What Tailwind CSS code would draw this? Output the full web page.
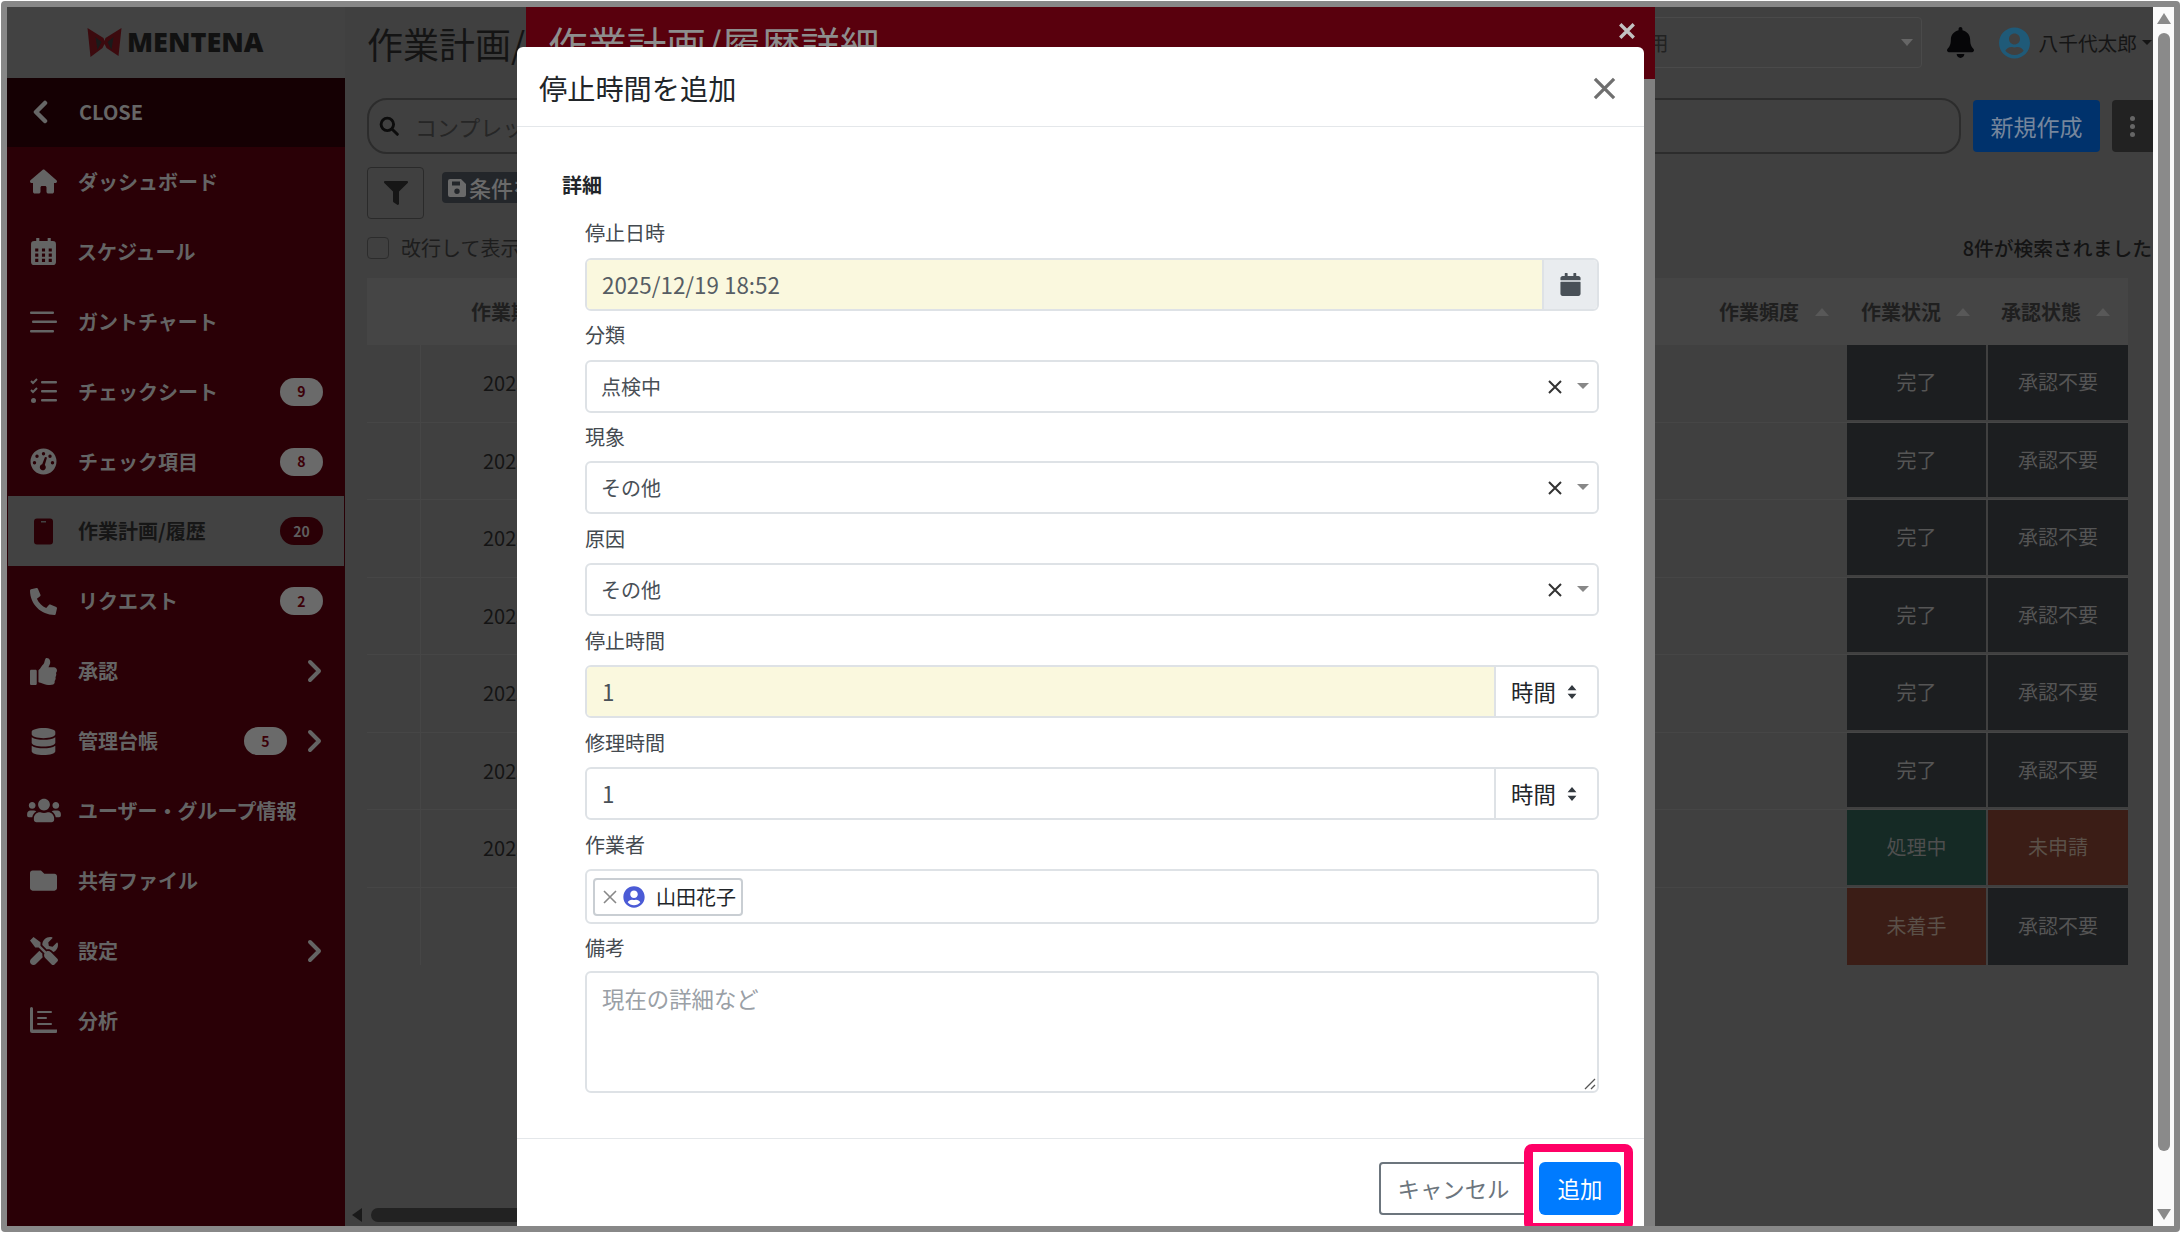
<!DOCTYPE html>
<html lang="ja">
<head>
  <meta charset="UTF-8">
  <title>停止時間を追加</title>
  <script src="https://cdn.jsdelivr.net/npm/@tailwindcss/browser@4"></script>
</head>
<body class="w-[2181px] h-[1233px] overflow-hidden bg-white font-['Noto_Sans_CJK_JP','Noto_Sans',sans-serif]">
  <div class="relative w-[2179px] h-[1231px] mt-px ml-px border-[6px] border-[#888] rounded-sm overflow-hidden flex bg-[#404040]">

    <!-- sidebar -->
    <aside class="w-[338px] shrink-0 bg-[#2a0006] flex flex-col">
      <div class="h-[71px] bg-[#424242] flex items-center pl-[80px] gap-[6px]">
        <svg viewBox="0 0 34 30" class="w-[35px] h-[30px]">
          <path d="M0 0 L16 10 L17 13 L18 10 L34 0 L31 28 L19 20 L17 16 L15 20 L3 29 Z" fill="#3c0a0e"/>
          <path d="M8 9 L14 14 L10 22 Z M26 9 L20 14 L24 22 Z" fill="#1a1a1a"/>
        </svg>
        <span class="font-['Open_Sans'] font-extrabold text-[27px] -ml-px text-[#111]">MENTENA</span>
      </div>
      <div class="h-[69px] bg-[#150003] flex items-center pl-[25px] pb-[2px] text-[#666]">
        <svg viewBox="0 0 16 24" class="w-[16px] h-[24px]"><path d="M13 3 L4 12 L13 21" fill="none" stroke="currentColor" stroke-width="4.5" stroke-linecap="round" stroke-linejoin="round"/></svg>
        <span class="ml-[31px] font-bold text-[20px]">CLOSE</span>
      </div>
      <nav class="flex flex-col text-[#646464] font-bold text-[20px]">
        <a class="h-[69.9px] flex items-center pl-[23px] pr-[22px]">
          <svg viewBox="0 0 576 512" class="w-[27px] h-[27px] fill-current"><path d="M575.8 255.5c0 18-15 32.1-32 32.1h-32l.7 160.2c0 2.7-.2 5.4-.5 8.1V472c0 22.1-17.9 40-40 40H456c-1.1 0-2.2 0-3.3-.1c-1.4 .1-2.8 .1-4.2 .1H416 392c-22.1 0-40-17.9-40-40V448 384c0-17.7-14.3-32-32-32H256c-17.7 0-32 14.3-32 32v64 24c0 22.1-17.9 40-40 40H160 128.1c-1.5 0-3-.1-4.5-.2c-1.2 .1-2.4 .2-3.6 .2H104c-22.1 0-40-17.9-40-40V360c0-.9 0-1.9 .1-2.8V287.6H32c-18 0-32-14-32-32.1c0-9 3-17 10-24L266.4 8c7-7 15-8 22-8s15 2 21 7L564.8 231.5c8 7 12 15 11 24z"/></svg>
          <span class="ml-[21px]">ダッシュボード</span>
        </a>
        <a class="h-[69.9px] flex items-center pl-[24px] pr-[22px]">
          <svg viewBox="0 0 24 26" class="w-[25px] h-[27px] fill-current"><path fill-rule="evenodd" d="M5 0h3v3h8V0h3v3h2a3 3 0 0 1 3 3v17a3 3 0 0 1-3 3H3a3 3 0 0 1-3-3V6a3 3 0 0 1 3-3h2z M4 10h3v3H4z M10.5 10h3v3h-3z M17 10h3v3h-3z M4 15h3v3H4z M10.5 15h3v3h-3z M17 15h3v3h-3z M4 20h3v3H4z M10.5 20h3v3h-3z M17 20h3v3h-3z"/></svg>
          <span class="ml-[21px]">スケジュール</span>
        </a>
        <a class="h-[69.9px] flex items-center pl-[23px] pr-[22px]">
          <svg viewBox="0 0 27 27" class="w-[27px] h-[27px] fill-current"><rect x="0" y="3.5" width="24" height="2.5" rx="1"/><rect x="2" y="12.5" width="25" height="2.5" rx="1"/><rect x="0" y="22" width="24" height="2.5" rx="1"/></svg>
          <span class="ml-[21px]">ガントチャート</span>
        </a>
        <a class="h-[69.9px] flex items-center pl-[23px] pr-[22px]">
          <svg viewBox="0 0 27 27" class="w-[27px] h-[27px] fill-current"><rect x="11" y="3" width="16" height="2.5" rx="1"/><rect x="11" y="12" width="16" height="2.5" rx="1"/><rect x="11" y="21" width="16" height="2.5" rx="1"/><path d="M1 3 L3 5 L7 1" fill="none" stroke="currentColor" stroke-width="2"/><path d="M1 12 L3 14 L7 10" fill="none" stroke="currentColor" stroke-width="2"/><circle cx="3.5" cy="22.5" r="2.5"/></svg>
          <span class="ml-[21px]">チェックシート</span>
          <span class="ml-auto w-[43px] h-[28px] rounded-full bg-[#6a6a6a] text-[#3c0008] text-[14px] flex items-center justify-center">9</span>
        </a>
        <a class="h-[69.9px] flex items-center pl-[23px] pr-[22px]">
          <svg viewBox="0 0 27 27" class="w-[27px] h-[27px] fill-current"><path fill-rule="evenodd" d="M13.5 0.5a13 13 0 1 0 0 26a13 13 0 1 0 0-26z M13.5 4a1.7 1.7 0 1 1 0 3.4a1.7 1.7 0 1 1 0-3.4z M7 6.5a1.7 1.7 0 1 1 0 3.4a1.7 1.7 0 1 1 0-3.4z M4.5 13a1.7 1.7 0 1 1 0 3.4a1.7 1.7 0 1 1 0-3.4z M20 6.5a1.7 1.7 0 1 1 0 3.4a1.7 1.7 0 1 1 0-3.4z M22.5 13a1.7 1.7 0 1 1 0 3.4a1.7 1.7 0 1 1 0-3.4z M17 9.5 L14.8 17 a3 3 0 1 1-2.6-.7 L15 9z"/></svg>
          <span class="ml-[21px]">チェック項目</span>
          <span class="ml-auto w-[43px] h-[28px] rounded-full bg-[#6a6a6a] text-[#3c0008] text-[14px] flex items-center justify-center">8</span>
        </a>
        <a class="h-[69.9px] mx-px flex items-center pl-[22px] pr-[21px] bg-[#424242] text-[#161616]">
          <svg viewBox="0 0 27 27" class="w-[27px] h-[27px]"><path fill-rule="evenodd" fill="#2a0006" d="M7 0.5 H20 a3 3 0 0 1 3 3 V23.5 a3 3 0 0 1-3 3 H7 a3 3 0 0 1-3-3 V3.5 a3 3 0 0 1 3-3z M11 3 h5 v1.4 h-5z"/></svg>
          <span class="ml-[21px]">作業計画/履歴</span>
          <span class="ml-auto w-[43px] h-[28px] rounded-full bg-[#2a0006] text-[#5e5e5e] text-[14px] flex items-center justify-center">20</span>
        </a>
        <a class="h-[69.9px] flex items-center pl-[23px] pr-[22px]">
          <svg viewBox="0 0 512 512" class="w-[27px] h-[27px] fill-current"><path transform="translate(512 0) scale(-1 1)" d="M493.4 24.6l-104-24c-11.3-2.6-22.9 3.3-27.5 13.9l-48 112c-4.2 9.8-1.4 21.3 6.9 28l60.6 49.6c-36 76.7-98.9 140.5-177.2 177.2l-49.6-60.6c-6.8-8.3-18.2-11.1-28-6.9l-112 48C3.9 366.5-2 378.1.6 389.4l24 104C27.1 504.2 36.7 512 48 512c256.1 0 464-207.5 464-464 0-11.2-7.7-20.9-18.6-23.4z"/></svg>
          <span class="ml-[21px]">リクエスト</span>
          <span class="ml-auto w-[43px] h-[28px] rounded-full bg-[#6a6a6a] text-[#3c0008] text-[14px] flex items-center justify-center">2</span>
        </a>
        <a class="h-[69.9px] flex items-center pl-[23px] pr-[22px]">
          <svg viewBox="0 0 512 512" class="w-[27px] h-[27px] fill-current"><path d="M104 224H24c-13.255 0-24 10.745-24 24v240c0 13.255 10.745 24 24 24h80c13.255 0 24-10.745 24-24V248c0-13.255-10.745-24-24-24zM384 81.452c0 42.416-25.97 66.208-33.277 94.548h101.723c33.397 0 59.397 27.746 59.553 58.098.084 17.938-7.546 37.249-19.439 49.197l-.11.11c9.836 23.337 8.237 56.037-9.308 79.469 8.681 25.895-.069 57.704-16.382 74.757 4.298 17.598 2.244 32.575-6.148 44.632C440.202 511.587 389.616 512 346.839 512l-2.845-.001c-48.287-.017-87.806-17.598-119.56-31.725-15.957-7.099-36.821-15.887-52.651-16.178-6.54-.12-11.783-5.457-11.783-11.998v-213.77c0-3.2 1.282-6.271 3.558-8.521 39.614-39.144 56.648-80.587 89.117-113.111 14.804-14.832 20.188-37.236 25.393-58.902C282.515 39.293 291.817 0 312 0c24 0 72 8 72 81.452z"/></svg>
          <span class="ml-[21px]">承認</span>
          <svg viewBox="0 0 16 24" class="ml-auto w-[16px] h-[24px]"><path d="M3 3 L12 12 L3 21" fill="none" stroke="currentColor" stroke-width="4" stroke-linecap="round" stroke-linejoin="round"/></svg>
        </a>
        <a class="h-[69.9px] flex items-center pl-[23px] pr-[22px]">
          <svg viewBox="0 0 448 512" class="w-[27px] h-[27px] fill-current"><path d="M448 73.143v45.714C448 159.143 347.667 192 224 192S0 159.143 0 118.857V73.143C0 32.857 100.333 0 224 0s224 32.857 224 73.143zM448 176v102.857C448 319.143 347.667 352 224 352S0 319.143 0 278.857V176c48.125 33.143 136.208 48.572 224 48.572S399.874 209.143 448 176zm0 160v102.857C448 479.143 347.667 512 224 512S0 479.143 0 438.857V336c48.125 33.143 136.208 48.572 224 48.572S399.874 369.143 448 336z"/></svg>
          <span class="ml-[21px]">管理台帳</span>
          <span class="ml-auto w-[43px] h-[28px] rounded-full bg-[#6a6a6a] text-[#3c0008] text-[14px] flex items-center justify-center">5</span>
          <svg viewBox="0 0 16 24" class="ml-[20px] w-[16px] h-[24px]"><path d="M3 3 L12 12 L3 21" fill="none" stroke="currentColor" stroke-width="4" stroke-linecap="round" stroke-linejoin="round"/></svg>
        </a>
        <a class="h-[69.9px] flex items-center pl-[20px] pr-[22px]">
          <svg viewBox="0 0 640 512" class="w-[34px] h-[27px] fill-current"><path d="M96 224c35.3 0 64-28.7 64-64s-28.7-64-64-64-64 28.7-64 64 28.7 64 64 64zm448 0c35.3 0 64-28.7 64-64s-28.7-64-64-64-64 28.7-64 64 28.7 64 64 64zm32 32h-64c-17.6 0-33.5 7.1-45.1 18.6 40.3 22.1 68.9 62 75.1 109.4h66c17.7 0 32-14.3 32-32v-32c0-35.3-28.7-64-64-64zm-256 0c61.9 0 112-50.1 112-112S381.9 32 320 32 208 82.1 208 144s50.1 112 112 112zm76.8 32h-8.3c-20.8 10-43.9 16-68.5 16s-47.6-6-68.5-16h-8.3C179.6 288 128 339.6 128 403.2V432c0 26.5 21.5 48 48 48h288c26.5 0 48-21.5 48-48v-28.8c0-63.6-51.6-115.2-115.2-115.2zm-223.7-13.4C161.5 263.1 145.6 256 128 256H64c-35.3 0-64 28.7-64 64v32c0 17.7 14.3 32 32 32h65.9c6.3-47.4 34.9-87.3 75.2-109.4z"/></svg>
          <span class="ml-[17px]">ユーザー・グループ情報</span>
        </a>
        <a class="h-[69.9px] flex items-center pl-[23px] pr-[22px]">
          <svg viewBox="0 0 512 512" class="w-[27px] h-[27px] fill-current"><path d="M464 128H272l-64-64H48C21.49 64 0 85.49 0 112v288c0 26.51 21.49 48 48 48h416c26.51 0 48-21.49 48-48V176c0-26.51-21.49-48-48-48z"/></svg>
          <span class="ml-[21px]">共有ファイル</span>
        </a>
        <a class="h-[69.9px] flex items-center pl-[23px] pr-[22px]">
          <svg viewBox="0 0 512 512" class="w-[28px] h-[28px] fill-current"><path d="M501.1 395.7L384 278.6c-23.1-23.1-57.6-27.6-85.4-13.9L192 158.1V96L64 0 0 64l96 128h62.1l106.6 106.6c-13.6 27.8-9.2 62.3 13.9 85.4l117.1 117.1c14.6 14.6 38.2 14.6 52.7 0l52.7-52.7c14.5-14.6 14.5-38.2 0-52.7zM331.7 225c28.3 0 54.9 11 74.9 31l19.4 19.4c15.8-6.9 30.8-16.5 43.8-29.5 37.1-37.1 49.7-89.3 37.9-136.7-2.2-9-13.5-12.1-20.1-5.5l-74.4 74.4-67.9-11.3L334 98.9l74.4-74.4c6.6-6.6 3.4-17.9-5.7-20.2-47.4-11.7-99.6.9-136.6 37.9-28.5 28.5-41.9 66.1-41.2 103.6l82.1 82.1c8.1-1.9 16.5-2.9 24.7-2.9zm-103.9 82l-56.7-56.7L18.7 402.8c-25 25-25 65.5 0 90.5s65.5 25 90.5 0l123.6-123.6c-7.6-19.9-9.9-41.6-5-62.7z"/></svg>
          <span class="ml-[20px]">設定</span>
          <svg viewBox="0 0 16 24" class="ml-auto w-[16px] h-[24px]"><path d="M3 3 L12 12 L3 21" fill="none" stroke="currentColor" stroke-width="4" stroke-linecap="round" stroke-linejoin="round"/></svg>
        </a>
        <a class="h-[69.9px] flex items-center pl-[23px] pr-[22px]">
          <svg viewBox="0 0 27 27" class="w-[27px] h-[27px] fill-current"><path d="M0 1.5 a1.5 1.5 0 0 1 3 0 V22.5 H27 V25 a1 1 0 0 1-1 1 H2 a2 2 0 0 1-2-2 Z"/><rect x="7" y="4" width="15" height="2" rx="1"/><rect x="7" y="10" width="10" height="2" rx="1"/><rect x="7" y="16" width="15" height="2" rx="1"/></svg>
          <span class="ml-[21px]">分析</span>
        </a>
      </nav>
    </aside>

    <!-- page behind the dialogs -->
    <main class="relative flex-1 min-w-0 pl-[22px]">
      <div class="h-[71px] flex items-center">
        <h1 class="text-[36px] font-normal text-[#141414] whitespace-nowrap">作業計画/履歴</h1>
        <div class="ml-auto w-[402px] h-[51px] border border-[#4a4a4a] rounded flex items-center justify-between pl-[113px] pr-[8px] text-[20px] text-[#222]">
          <span>Q用</span><span class="w-0 h-0 border-x-[6px] border-x-transparent border-t-[7px] border-t-[#666]"></span>
        </div>
        <svg viewBox="0 0 448 512" class="ml-[25px] w-[27px] h-[31px] fill-[#060608]"><path d="M224 512c35.32 0 63.97-28.65 63.97-64H160.03c0 35.35 28.65 64 63.97 64zm215.39-149.71c-19.32-20.76-55.47-51.99-55.47-154.29 0-77.7-54.48-139.9-127.94-155.16V32c0-17.67-14.32-32-31.98-32s-31.98 14.33-31.98 32v20.84C118.56 68.1 64.08 130.3 64.08 208c0 102.3-36.15 133.53-55.47 154.29-6 6.45-8.66 14.16-8.61 21.71.11 16.4 12.98 32 32.1 32h383.8c19.12 0 32-15.6 32.1-32 .05-7.55-2.61-15.27-8.61-21.71z"/></svg>
        <svg viewBox="0 0 496 512" class="ml-[25px] w-[31px] h-[32px] fill-[#1f5a78]"><path d="M248 8C111 8 0 119 0 256s111 248 248 248 248-111 248-248S385 8 248 8zm0 96c48.6 0 88 39.4 88 88s-39.4 88-88 88-88-39.4-88-88 39.4-88 88-88zm0 344c-58.7 0-111.3-26.6-146.5-68.2 18.8-35.4 55.6-59.8 98.5-59.8 2.4 0 4.8.4 7.1 1.1 13 4.2 26.6 6.9 40.9 6.9 14.3 0 28-2.7 40.9-6.9 2.3-.7 4.7-1.1 7.1-1.1 42.9 0 79.7 24.4 98.5 59.8C359.3 421.4 306.7 448 248 448z"/></svg>
        <span class="ml-[9px] text-[19.7px] text-[#151515] whitespace-nowrap">八千代太郎</span>
        <span class="ml-[5px] mr-px w-0 h-0 border-x-[5px] border-x-transparent border-t-[5px] border-t-[#151515]"></span>
      </div>

      <div class="flex items-center gap-[12px] mt-[20px] h-[56px]">
        <div class="flex-1 h-[56px] rounded-[20px] border-2 border-[#2c2c2c] flex items-center pl-[10px] gap-[16px] overflow-hidden">
          <svg viewBox="0 0 24 24" class="w-[20px] h-[20px]"><circle cx="10" cy="10" r="7.5" fill="none" stroke="#0c0c0c" stroke-width="3.5"/><path d="M15.5 15.5 L22 22" stroke="#0c0c0c" stroke-width="3.5" stroke-linecap="round"/></svg>
          <span class="text-[22px] text-[#262626] whitespace-nowrap">コンプレックス</span>
        </div>
        <button class="w-[127px] h-[52px] rounded bg-[#00326c] text-[#76869c] text-[23px]">新規作成</button>
        <button class="w-[41px] h-[52px] rounded-l bg-[#222] flex flex-col items-center justify-center gap-[3px]">
          <span class="w-[5px] h-[5px] rounded-full bg-[#666]"></span><span class="w-[5px] h-[5px] rounded-full bg-[#666]"></span><span class="w-[5px] h-[5px] rounded-full bg-[#666]"></span>
        </button>
      </div>

      <div class="flex items-start mt-[13px] h-[52px]">
        <button class="w-[57px] h-[52px] rounded border border-[#2a2a2a] flex items-center justify-center">
          <svg viewBox="0 0 512 512" class="w-[24px] h-[24px] fill-[#161616]"><path d="M487.976 0H24.028C2.71 0-8.047 25.866 7.058 40.971L192 225.941V432c0 7.831 3.821 15.17 10.237 19.662l80 55.98C298.02 518.69 320 507.493 320 487.98V225.941l184.947-184.97C520.021 25.896 509.338 0 487.976 0z"/></svg>
        </button>
        <div class="ml-[18px] mt-[5px] w-[200px] h-[31px] rounded bg-[#23262a] flex items-center pl-[5px] gap-[2px] text-[#6a6a6a] text-[22px] font-medium">
          <svg viewBox="0 0 20 20" class="w-[20px] h-[20px] shrink-0"><path fill-rule="evenodd" fill="#6a6a6a" d="M3 1 H14 L19 6 V17 a2 2 0 0 1-2 2 H3 a2 2 0 0 1-2-2 V3 a2 2 0 0 1 2-2z M5 3.5 V7.5 H13 V3.5z M10 10.5 a2.7 2.7 0 1 0 0 5.4 a2.7 2.7 0 1 0 0-5.4z"/></svg>
          <span class="whitespace-nowrap">条件を保存</span>
        </div>
      </div>

      <div class="flex items-center mt-[16px] h-[26px]">
        <span class="w-[22px] h-[22px] rounded border border-[#2c2c2c]"></span>
        <span class="ml-[12px] text-[20px] text-[#1d1d1d]">改行して表示</span>
        <span class="ml-auto mr-px text-[19.8px] font-medium text-[#141414]">8件が検索されました</span>
      </div>

      <!-- table: only the outer columns show either side of the dialogs -->
      <div class="mt-[17px] flex h-[67px] w-[1761px] bg-[#454545] items-center text-[#1f1f1f] text-[20px] font-bold">
        <span class="ml-[104px]">作業期間</span>
        <div class="ml-auto flex items-center">
          <span>作業頻度</span><span class="ml-[16px] w-0 h-0 border-x-[7px] border-x-transparent border-b-[8px] border-b-[#585858]"></span>
          <span class="ml-[32px]">作業状況</span><span class="ml-[15px] w-0 h-0 border-x-[7px] border-x-transparent border-b-[8px] border-b-[#585858]"></span>
          <span class="ml-[31px]">承認状態</span><span class="ml-[15px] mr-[18px] w-0 h-0 border-x-[7px] border-x-transparent border-b-[8px] border-b-[#585858]"></span>
        </div>
      </div>
      <div class="w-[1761px] flex flex-col text-[20px]">
        <div class="h-[77.5px] flex items-center border-b border-[#464646]">
          <span class="w-[54px] h-full border-r border-[#464646]"></span><span class="ml-[62px] text-[#141414]">2025</span>
          <span class="ml-auto w-[139px] h-full bg-[#1c1e20] border-b-2 border-[#404040] text-[#555] flex items-center justify-center">完了</span>
          <span class="ml-[2px] w-[140px] h-full bg-[#1c1e20] border-b-2 border-[#404040] text-[#555] flex items-center justify-center">承認不要</span>
        </div>
        <div class="h-[77.5px] flex items-center border-b border-[#464646]">
          <span class="w-[54px] h-full border-r border-[#464646]"></span><span class="ml-[62px] text-[#141414]">2025</span>
          <span class="ml-auto w-[139px] h-full bg-[#1c1e20] border-b-2 border-[#404040] text-[#555] flex items-center justify-center">完了</span>
          <span class="ml-[2px] w-[140px] h-full bg-[#1c1e20] border-b-2 border-[#404040] text-[#555] flex items-center justify-center">承認不要</span>
        </div>
        <div class="h-[77.5px] flex items-center border-b border-[#464646]">
          <span class="w-[54px] h-full border-r border-[#464646]"></span><span class="ml-[62px] text-[#141414]">2025</span>
          <span class="ml-auto w-[139px] h-full bg-[#1c1e20] border-b-2 border-[#404040] text-[#555] flex items-center justify-center">完了</span>
          <span class="ml-[2px] w-[140px] h-full bg-[#1c1e20] border-b-2 border-[#404040] text-[#555] flex items-center justify-center">承認不要</span>
        </div>
        <div class="h-[77.5px] flex items-center border-b border-[#464646]">
          <span class="w-[54px] h-full border-r border-[#464646]"></span><span class="ml-[62px] text-[#141414]">2025</span>
          <span class="ml-auto w-[139px] h-full bg-[#1c1e20] border-b-2 border-[#404040] text-[#555] flex items-center justify-center">完了</span>
          <span class="ml-[2px] w-[140px] h-full bg-[#1c1e20] border-b-2 border-[#404040] text-[#555] flex items-center justify-center">承認不要</span>
        </div>
        <div class="h-[77.5px] flex items-center border-b border-[#464646]">
          <span class="w-[54px] h-full border-r border-[#464646]"></span><span class="ml-[62px] text-[#141414]">2025</span>
          <span class="ml-auto w-[139px] h-full bg-[#1c1e20] border-b-2 border-[#404040] text-[#555] flex items-center justify-center">完了</span>
          <span class="ml-[2px] w-[140px] h-full bg-[#1c1e20] border-b-2 border-[#404040] text-[#555] flex items-center justify-center">承認不要</span>
        </div>
        <div class="h-[77.5px] flex items-center border-b border-[#464646]">
          <span class="w-[54px] h-full border-r border-[#464646]"></span><span class="ml-[62px] text-[#141414]">2025</span>
          <span class="ml-auto w-[139px] h-full bg-[#1c1e20] border-b-2 border-[#404040] text-[#555] flex items-center justify-center">完了</span>
          <span class="ml-[2px] w-[140px] h-full bg-[#1c1e20] border-b-2 border-[#404040] text-[#555] flex items-center justify-center">承認不要</span>
        </div>
        <div class="h-[77.5px] flex items-center border-b border-[#464646]">
          <span class="w-[54px] h-full border-r border-[#464646]"></span><span class="ml-[62px] text-[#141414]">2025</span>
          <span class="ml-auto w-[139px] h-full bg-[#152a25] border-b-2 border-[#404040] text-[#4e4e4e] flex items-center justify-center">処理中</span>
          <span class="ml-[2px] w-[140px] h-full bg-[#3b1d16] border-b-2 border-[#404040] text-[#5a5048] flex items-center justify-center">未申請</span>
        </div>
        <div class="h-[77.5px] flex items-center">
          <span class="w-[54px] h-full border-r border-[#464646]"></span>
          <span class="ml-auto w-[139px] h-full bg-[#3b1d16] text-[#5a5048] flex items-center justify-center">未着手</span>
          <span class="ml-[2px] w-[140px] h-full bg-[#1c1e20] text-[#555] flex items-center justify-center">承認不要</span>
        </div>
      </div>

      <!-- horizontal scrollbar -->
      <div class="absolute left-[7px] bottom-[4px] flex items-center gap-[9px]">
        <span class="w-0 h-0 border-y-[7px] border-y-transparent border-r-[10px] border-r-[#1a1a1a]"></span>
        <span class="w-[400px] h-[14px] rounded-full bg-[#222]"></span>
      </div>
    </main>

    <!-- page scrollbar -->
    <div class="w-[21px] shrink-0 bg-[#fafafa] flex flex-col items-center pt-[6px] pb-[6px]">
      <span class="w-0 h-0 border-x-[7px] border-x-transparent border-b-[11px] border-b-[#8a8a8a]"></span>
      <span class="mt-[9px] w-[12px] h-[1118px] rounded-full bg-[#8a8a8a]"></span>
      <span class="mt-auto w-0 h-0 border-x-[7px] border-x-transparent border-t-[11px] border-t-[#8a8a8a]"></span>
    </div>

    <!-- dialog underneath: 作業計画/履歴詳細 -->
    <div class="absolute left-[519px] top-0 w-[1129px] h-[1220px] bg-[#808080]">
      <div class="h-[72px] bg-[#59000d] relative pl-[22px] overflow-hidden">
        <span class="block mt-[7px] text-[39.5px] text-[#8d8d8d] whitespace-nowrap">作業計画/履歴詳細</span>
        <svg viewBox="0 0 16 16" class="absolute right-[19px] top-[15px] w-[18px] h-[18px]"><path d="M2 2 L14 14 M14 2 L2 14" stroke="#c2c2c2" stroke-width="3"/></svg>
      </div>
    </div>

    <!-- dialog on top: 停止時間を追加 -->
    <div class="absolute left-[510px] top-[40px] w-[1127px] h-[1200px] bg-white rounded-t-md flex flex-col">
      <div class="h-[80px] shrink-0 border-b border-[#e4e7ea] flex items-center justify-between pl-[22px] pr-[28px] pt-[3px]">
        <h2 class="text-[28.2px] font-normal text-[#212529]">停止時間を追加</h2>
        <svg viewBox="0 0 24 24" class="w-[23px] h-[23px]"><path d="M2 2 L22 22 M22 2 L2 22" stroke="#6f6f6f" stroke-width="3.4"/></svg>
      </div>

      <div class="pl-[68px] pr-[45px] h-[1012px] border-b border-[#e4e7ea] text-[20px]">
        <div class="h-[30px] mt-[43px] -ml-[23px] font-bold text-[#212529]">詳細</div>

        <label class="block h-[30px] mt-[18px] text-[#444a50]">停止日時</label>
        <div class="mt-[10px] h-[53px] flex rounded-md border-2 border-[#dee2e6] overflow-hidden">
          <div class="flex-1 bg-[#faf8de] flex items-center pl-[15px] text-[22.4px] text-[#565d64]">2025/12/19 18:52</div>
          <div class="w-[55px] bg-[#e9ecef] border-l-2 border-[#dee2e6] flex items-center justify-center">
            <svg viewBox="0 0 448 512" class="w-[21px] h-[23px] fill-[#495057]"><path d="M12 192h424c6.6 0 12 5.4 12 12v260c0 26.5-21.5 48-48 48H48c-26.5 0-48-21.5-48-48V204c0-6.6 5.4-12 12-12zm436-44v-36c0-26.5-21.5-48-48-48h-48V12c0-6.6-5.4-12-12-12h-40c-6.6 0-12 5.4-12 12v52H160V12c0-6.6-5.4-12-12-12h-40c-6.6 0-12 5.4-12 12v52H48C21.5 64 0 85.5 0 112v36c0 6.6 5.4 12 12 12h424c6.6 0 12-5.4 12-12z"/></svg>
          </div>
        </div>

        <label class="block h-[30px] mt-[9px] text-[#444a50]">分類</label>
        <div class="mt-[10px] h-[53px] flex items-center rounded-md border-2 border-[#dee2e6] pl-[14px] pr-[8px] text-[#495057]">
          <span>点検中</span>
          <svg viewBox="0 0 14 14" class="ml-auto w-[14px] h-[14px]"><path d="M1 1 L13 13 M13 1 L1 13" stroke="#333" stroke-width="2"/></svg>
          <span class="ml-[15px] mb-[2px] w-0 h-0 border-x-[6px] border-x-transparent border-t-[6px] border-t-[#888]"></span>
        </div>

        <label class="block h-[30px] mt-[9px] text-[#444a50]">現象</label>
        <div class="mt-[9px] h-[53px] flex items-center rounded-md border-2 border-[#dee2e6] pl-[14px] pr-[8px] text-[#495057]">
          <span>その他</span>
          <svg viewBox="0 0 14 14" class="ml-auto w-[14px] h-[14px]"><path d="M1 1 L13 13 M13 1 L1 13" stroke="#333" stroke-width="2"/></svg>
          <span class="ml-[15px] mb-[2px] w-0 h-0 border-x-[6px] border-x-transparent border-t-[6px] border-t-[#888]"></span>
        </div>

        <label class="block h-[30px] mt-[10px] text-[#444a50]">原因</label>
        <div class="mt-[9px] h-[53px] flex items-center rounded-md border-2 border-[#dee2e6] pl-[14px] pr-[8px] text-[#495057]">
          <span>その他</span>
          <svg viewBox="0 0 14 14" class="ml-auto w-[14px] h-[14px]"><path d="M1 1 L13 13 M13 1 L1 13" stroke="#333" stroke-width="2"/></svg>
          <span class="ml-[15px] mb-[2px] w-0 h-0 border-x-[6px] border-x-transparent border-t-[6px] border-t-[#888]"></span>
        </div>

        <label class="block h-[30px] mt-[10px] text-[#444a50]">停止時間</label>
        <div class="mt-[9px] h-[53px] flex rounded-md border-2 border-[#dee2e6] overflow-hidden">
          <div class="flex-1 bg-[#faf8de] flex items-center pl-[15px] text-[22.4px] text-[#495057]">1</div>
          <div class="w-[103px] border-l-2 border-[#dee2e6] flex items-center pl-[15px] gap-[10px] text-[#212529] text-[22.4px]">時間
            <svg viewBox="0 0 12 18" class="w-[12px] h-[16px] fill-[#343a40]"><path d="M6 1 L11 7 H1 Z M6 17 L11 11 H1 Z"/></svg>
          </div>
        </div>

        <label class="block h-[30px] mt-[10px] text-[#444a50]">修理時間</label>
        <div class="mt-[9px] h-[53px] flex rounded-md border-2 border-[#dee2e6] overflow-hidden">
          <div class="flex-1 flex items-center pl-[15px] text-[22.4px] text-[#495057]">1</div>
          <div class="w-[103px] border-l-2 border-[#dee2e6] flex items-center pl-[15px] gap-[10px] text-[#212529] text-[22.4px]">時間
            <svg viewBox="0 0 12 18" class="w-[12px] h-[16px] fill-[#343a40]"><path d="M6 1 L11 7 H1 Z M6 17 L11 11 H1 Z"/></svg>
          </div>
        </div>

        <label class="block h-[30px] mt-[10px] text-[#444a50]">作業者</label>
        <div class="mt-[9px] h-[55px] flex items-center rounded-md border-2 border-[#dee2e6] pl-[6px]">
          <div class="h-[38px] w-[150px] flex items-center rounded border-2 border-[#c9ced3] pl-[8px] text-[#212529]">
            <svg viewBox="0 0 14 14" class="w-[14px] h-[14px]"><path d="M1 1 L13 13 M13 1 L1 13" stroke="#888" stroke-width="1.6"/></svg>
            <svg viewBox="0 0 496 512" class="ml-[6px] w-[22px] h-[22px] fill-[#4b5bd6]"><path d="M248 8C111 8 0 119 0 256s111 248 248 248 248-111 248-248S385 8 248 8zm0 96c48.6 0 88 39.4 88 88s-39.4 88-88 88-88-39.4-88-88 39.4-88 88-88zm0 344c-58.7 0-111.3-26.6-146.5-68.2 18.8-35.4 55.6-59.8 98.5-59.8 2.4 0 4.8.4 7.1 1.1 13 4.2 26.6 6.9 40.9 6.9 14.3 0 28-2.7 40.9-6.9 2.3-.7 4.7-1.1 7.1-1.1 42.9 0 79.7 24.4 98.5 59.8C359.3 421.4 306.7 448 248 448z"/></svg>
            <span class="ml-[11px]">山田花子</span>
          </div>
        </div>

        <label class="block h-[30px] mt-[9px] text-[#444a50]">備考</label>
        <div class="relative mt-[8px] h-[122px] rounded-md border-2 border-[#dee2e6] pl-[15px] pt-[9px] text-[22.4px] text-[#9aa0a6]">現在の詳細など
          <svg viewBox="0 0 12 12" class="absolute right-[1px] bottom-[1px] w-[12px] h-[12px]"><path d="M11 1 L1 11 M11 7 L7 11" stroke="#555" stroke-width="1.3"/></svg>
        </div>
      </div>

      <div class="flex items-start justify-end pt-[23px] pr-[23px] gap-[11px]">
        <button class="w-[149px] h-[53px] rounded border-2 border-[#6c757d] text-[#6c757d] text-[22.4px]">キャンセル</button>
        <button class="w-[82px] h-[53px] rounded-md bg-[#007bff] text-white text-[22.4px]">追加</button>
      </div>
    </div>

    <!-- pink highlight round the add button -->
    <div class="absolute left-[1517px] top-[1137px] w-[109px] h-[87px] rounded-lg border-x-[9px] border-y-[8px] border-[#ff0066]"></div>
  </div>
</body>
</html>
